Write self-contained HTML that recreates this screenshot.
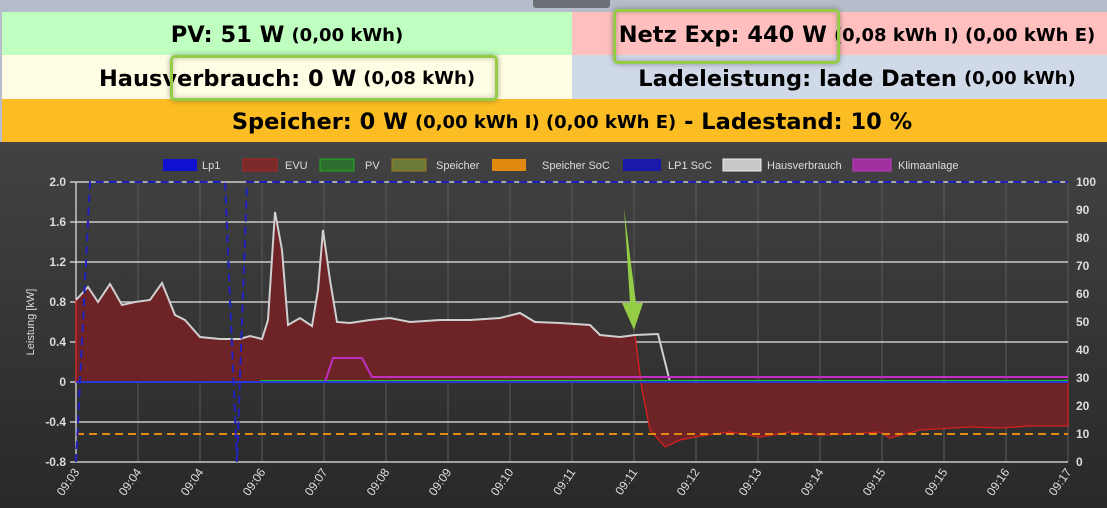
<!DOCTYPE html><html><head><style>
body{margin:0;width:1107px;height:508px;overflow:hidden;font-family:"Liberation Sans","DejaVu Sans",sans-serif;background:#2e2e2e;position:relative}
.bar{position:absolute;left:0;top:0;width:1107px;height:12px;background:#b6bcc9}
.tab{position:absolute;left:533px;top:0;width:77px;height:8px;background:#6b6f78;border-radius:0 0 3px 3px}
.c{position:absolute;display:flex;align-items:center;justify-content:center;font-family:"DejaVu Sans",sans-serif;font-weight:bold;font-size:22.5px;color:#000;white-space:nowrap;padding-top:3px;box-sizing:border-box}
.c small{font-size:18px;margin-left:7px}
.hl{position:absolute;border:3px solid #94cd45;border-radius:5px;box-shadow:0 0 6px rgba(0,0,0,.35),inset 0 0 6px rgba(0,0,0,.25)}
</style></head><body>
<div class="bar"></div><div class="tab"></div>
<div class="c" style="left:2px;top:12px;width:570px;height:43px;background:#bfffc0">PV: 51 W<small>(0,00 kWh)</small></div>
<div class="c" style="left:572px;top:12px;width:570px;height:43px;background:#ffbfbf">Netz Exp: 440 W<small>(0,08 kWh I) (0,00 kWh E)</small></div>
<div class="c" style="left:2px;top:55px;width:570px;height:44px;background:#fffde3">Hausverbrauch: 0 W<small>(0,08 kWh)</small></div>
<div class="c" style="left:572px;top:55px;width:570px;height:44px;background:#d0d9e8">Ladeleistung: lade Daten<small>(0,00 kWh)</small></div>
<div class="c" style="left:2px;top:99px;width:1140px;height:43px;background:#fbbd23">Speicher: 0 W<small>(0,00 kWh I) (0,00 kWh E)</small>&nbsp;- Ladestand: 10 %</div>
<div style="position:absolute;left:0;top:0;width:2px;height:142px;background:#b6bcc9"></div>
<div class="hl" style="left:170px;top:55px;width:322px;height:40px"></div>
<div class="hl" style="left:613px;top:9px;width:221px;height:49px"></div>
<svg style="position:absolute;left:0;top:142px" width="1107" height="366" viewBox="0 142 1107 366" font-family="Liberation Sans,sans-serif">
<defs><linearGradient id="g" x1="0" y1="0" x2="0" y2="1"><stop offset="0" stop-color="#424242"/><stop offset="1" stop-color="#292929"/></linearGradient></defs>
<rect x="0" y="142" width="1107" height="366" fill="url(#g)"/>
<g stroke="#5a5a5a" stroke-width="1">
<path d="M138 182V462M200 182V462M262 182V462M324 182V462M386 182V462M448 182V462M510 182V462M572 182V462M634 182V462M696 182V462M758 182V462M820 182V462M882 182V462M944 182V462M1006 182V462M1068 182V462"/></g>
<g stroke="#e6e6e6" stroke-width="1.2">
<path d="M70 182H1068M70 222H1068M70 262H1068M70 302H1068M70 342H1068M70 382H1068M70 422H1068M70 462H1068M76 182V462"/></g>
<g fill="#ddd" font-size="12" font-weight="bold" text-anchor="end">
<text x="66" y="186">2.0</text><text x="66" y="226">1.6</text><text x="66" y="266">1.2</text><text x="66" y="306">0.8</text><text x="66" y="346">0.4</text><text x="66" y="386">0</text><text x="66" y="426">-0.4</text><text x="66" y="466">-0.8</text></g>
<g fill="#ddd" font-size="12" font-weight="bold">
<text x="1076" y="186">100</text><text x="1076" y="214">90</text><text x="1076" y="242">80</text><text x="1076" y="270">70</text><text x="1076" y="298">60</text><text x="1076" y="326">50</text><text x="1076" y="354">40</text><text x="1076" y="382">30</text><text x="1076" y="410">20</text><text x="1076" y="438">10</text><text x="1076" y="466">0</text></g>
<text x="34" y="322" fill="#ddd" font-size="11" transform="rotate(-90 34 322)" text-anchor="middle">Leistung [kW]</text>
<g fill="#ddd" font-size="12" text-anchor="end">
<text transform="translate(80 472) rotate(-55)">09:03</text><text transform="translate(142 472) rotate(-55)">09:04</text><text transform="translate(204 472) rotate(-55)">09:04</text><text transform="translate(266 472) rotate(-55)">09:06</text><text transform="translate(328 472) rotate(-55)">09:07</text><text transform="translate(390 472) rotate(-55)">09:08</text><text transform="translate(452 472) rotate(-55)">09:09</text><text transform="translate(514 472) rotate(-55)">09:10</text><text transform="translate(576 472) rotate(-55)">09:11</text><text transform="translate(638 472) rotate(-55)">09:11</text><text transform="translate(700 472) rotate(-55)">09:12</text><text transform="translate(762 472) rotate(-55)">09:13</text><text transform="translate(824 472) rotate(-55)">09:14</text><text transform="translate(886 472) rotate(-55)">09:15</text><text transform="translate(948 472) rotate(-55)">09:15</text><text transform="translate(1010 472) rotate(-55)">09:16</text><text transform="translate(1072 472) rotate(-55)">09:17</text></g>
<path d="M76 382L76 300L88 287L98 302L110 284L122 305L135 302L150 300L162 283L175 315L185 320L200 337L220 339L240 339L250 336L262 339L268 320L275 212L282 250L288 325L300 318L312 326L318 290L323 230L330 280L337 322L350 323L370 320L390 318L410 322L440 320L470 320L500 318L520 313L535 322L560 323L590 325L600 335L620 337L635 335L642 390L650 430L665 447L680 440L700 436L730 432L760 437L790 432L820 435L850 434L880 432L890 438L920 430L970 427L1000 428L1030 426L1068 426L1068 382Z" fill="#6e2426" stroke="#d82020" stroke-width="1.3"/>
<path d="M76 300L88 287L98 302L110 284L122 305L135 302L150 300L162 283L175 315L185 320L200 337L220 339L240 339L250 336L262 339L268 320L275 212L282 250L288 325L300 318L312 326L318 290L323 230L330 280L337 322L350 323L370 320L390 318L410 322L440 320L470 320L500 318L520 313L535 322L560 323L590 325L600 335L620 337L635 335L658 334L670 382L1068 382" fill="none" stroke="#d0d0d0" stroke-width="2"/>
<path d="M260 381L1068 381" stroke="#22c022" stroke-width="2"/>
<path d="M76 382L325 382L333 358L362 358L372 377L1068 377" fill="none" stroke="#c030c0" stroke-width="2"/>
<path d="M76 382H1068" stroke="#2a3ad8" stroke-width="2"/>
<path d="M76 434H1068" stroke="#e08a10" stroke-width="2" stroke-dasharray="8 5"/>
<path d="M76 462L90 182L225 182L237 462L247 182L1068 182" fill="none" stroke="#2020c0" stroke-width="2" stroke-dasharray="8 5"/>
<g font-size="11" fill="#ddd">
<rect x="163" y="159" width="34" height="12" fill="#1010d0"/><text x="202" y="169">Lp1</text>
<rect x="243" y="159" width="34" height="12" fill="#7a2a2a" stroke="#b02020"/><text x="285" y="169">EVU</text>
<rect x="320" y="159" width="34" height="12" fill="#2e6e2e" stroke="#20b020"/><text x="365" y="169">PV</text>
<rect x="392" y="159" width="34" height="12" fill="#6b7a36" stroke="#a07a20"/><text x="436" y="169">Speicher</text>
<rect x="492" y="159" width="34" height="12" fill="#e08a10"/><text x="542" y="169">Speicher SoC</text>
<rect x="623" y="159" width="38" height="12" fill="#1a1aaa"/><text x="668" y="169">LP1 SoC</text>
<rect x="723" y="159" width="38" height="12" fill="#c8c8c8" stroke="#eee"/><text x="767" y="169">Hausverbrauch</text>
<rect x="853" y="159" width="38" height="12" fill="#a030a0" stroke="#c040c0"/><text x="898" y="169">Klimaanlage</text></g>
<path d="M624 208L636 303L643 303L634 330L622 303L630 303Z" fill="#94cd45"/>
</svg>
</body></html>
